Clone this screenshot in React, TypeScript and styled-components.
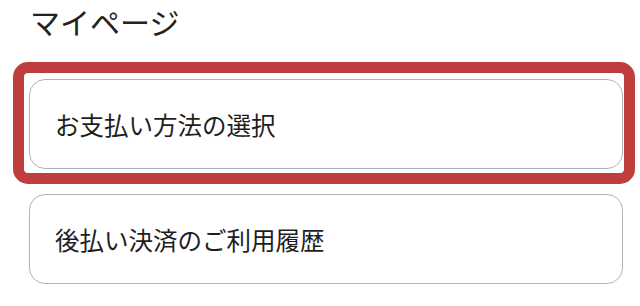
import React from "react";
import styled, { createGlobalStyle } from "styled-components";

const Global = createGlobalStyle`
  html, body { margin: 0; padding: 0; background: #ffffff; }
  body { font-family: "Noto Sans CJK JP", "Noto Sans", sans-serif; color: #222222; }
`;

const Page = styled.div`
  width: 640px;
  height: 306px;
  overflow: hidden;
  display: flex;
  flex-direction: column;
`;

const Title = styled.h1`
  margin: 0;
  padding: 0 0 0 30px;
  height: 62px;
  font-size: 30px;
  font-weight: 400;
  line-height: 42px;
  color: #222222;
`;

const List = styled.div`
  display: flex;
  flex-direction: column;
  gap: 10px;
  padding-left: 13px;
`;

const Highlight = styled.div`
  width: 622px;
  box-sizing: border-box;
  border: 11px solid #be3e3e;
  border-radius: 15px;
  padding: 6px 2px 4px 5px;
`;

const Card = styled.a<{ $indent?: number }>`
  display: flex;
  align-items: center;
  box-sizing: border-box;
  width: 594px;
  height: 90px;
  margin-left: ${(p) => p.$indent ?? 0}px;
  padding: 3px 0 0 25px;
  border: 1.5px solid #aeb3bd;
  border-radius: 16px;
  background: #ffffff;
  font-size: 24.5px;
  line-height: 1;
  color: #1e1e1e;
  text-decoration: none;
`;

export default function App() {
  return (
    <Page>
      <Global />
      <Title>マイページ</Title>
      <List>
        <Highlight>
          <Card href="#">お支払い方法の選択</Card>
        </Highlight>
        <Card href="#" $indent={16}>後払い決済のご利用履歴</Card>
      </List>
    </Page>
  );
}
